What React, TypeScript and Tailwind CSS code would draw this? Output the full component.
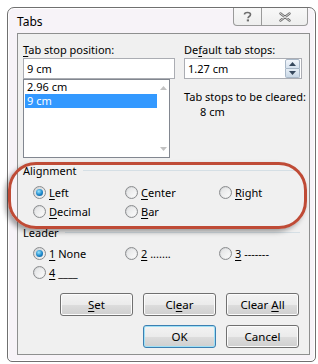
import React from "react";

function Radio({ checked = false }: { checked?: boolean }) {
  return (
    <span className="w-[13px] h-[13px] shrink-0 rounded-full border border-[#8a8c8e] bg-[linear-gradient(135deg,#cfd1d3,#f7f7f7)] flex items-center justify-center">
      {checked ? (
        <span className="w-[7px] h-[7px] rounded-full bg-[radial-gradient(circle_at_40%_35%,#9ae6ff,#1b86c9_55%,#0b4f86)]" />
      ) : (
        <span className="w-[9px] h-[9px] rounded-full bg-[linear-gradient(135deg,#e2e3e4,#fbfbfb)]" />
      )}
    </span>
  );
}

function Opt({ checked, children, w }: { checked?: boolean; children: React.ReactNode; w: string }) {
  return (
    <div className={`flex items-center gap-[3px] ${w}`}>
      <Radio checked={checked} />
      <span className="leading-none whitespace-nowrap">{children}</span>
    </div>
  );
}

function Btn({ children, def = false }: { children: React.ReactNode; def?: boolean }) {
  return (
    <div
      className={`w-[73px] h-[23px] rounded-[3px] border flex items-center justify-center bg-[linear-gradient(#f3f3f3,#ebebeb_50%,#dddddd_51%,#cfcfcf)] ${
        def ? "border-[#3c7fb1] shadow-[inset_0_0_0_1px_#9fe0f6]" : "border-[#707070] shadow-[inset_0_0_0_1px_#fcfcfc]"
      }`}
    >
      <span className="leading-none whitespace-pre text-[11.5px]">{children}</span>
    </div>
  );
}

function GroupLabel({ text }: { text: string }) {
  return (
    <div className="flex items-center h-[14px]">
      <span className="leading-none">{text}</span>
      <span className="flex-1 ml-[6px] mr-[3px] h-px bg-[#d5dfe5]" />
    </div>
  );
}

export default function App() {
  return (
    <div className="w-[318px] h-[364px] bg-white relative overflow-hidden font-['Noto_Sans',sans-serif] text-[11px] text-black">
      <div className="ml-[7px] mt-[7px] w-[309px] h-[355px] border border-[#707070] rounded-t-[7px] rounded-b-[5px] bg-[#f7f3f8] flex flex-col shadow-[inset_0_0_0_1px_#ffffff]">
        {/* title bar */}
        <div className="h-[25px] flex items-start shrink-0">
          <div className="pl-[9px] pt-[8px] text-[12px] leading-none">Tabs</div>
          <div className="ml-auto mr-[7px] flex h-[18px]">
            <div className="w-[29px] h-[18px] border border-t-0 border-[#9a9a9a] rounded-bl-[4px] flex items-center justify-center bg-[linear-gradient(#f8f8f8,#eeeeee)]">
              <svg width="9" height="11" viewBox="0 0 9 11">
                <path d="M1.5 3.5 C1.5 0.8 7.5 0.8 7.5 3.5 C7.5 5.5 5 5.5 5 7.2" fill="none" stroke="#6e6e6e" strokeWidth="1.6" />
                <rect x="3.8" y="8.4" width="2.2" height="2" fill="#6e6e6e" />
              </svg>
            </div>
            <div className="w-[46px] h-[18px] border border-t-0 border-l-0 border-[#9a9a9a] rounded-br-[4px] flex items-center justify-center bg-[linear-gradient(#f8f8f8,#eeeeee)]">
              <svg width="12" height="10" viewBox="0 0 12 10">
                <path d="M1.5 1.5 L10.5 8.5 M10.5 1.5 L1.5 8.5" stroke="#6e6e6e" strokeWidth="2.4" strokeLinecap="round" />
                <path d="M1.5 1.5 L10.5 8.5 M10.5 1.5 L1.5 8.5" stroke="#f4f4f4" strokeWidth="0.8" strokeLinecap="round" />
              </svg>
            </div>
          </div>
        </div>
        {/* client area */}
        <div className="ml-[9px] w-[293px] h-[322px] border border-[#8e8f8f] bg-[#f0f0f0] pl-[5px] pr-[6px] pt-[10px] flex flex-col">
          <div className="flex">
            {/* left column */}
            <div className="w-[152px] flex flex-col">
              <div className="leading-none h-[13px] whitespace-nowrap">
                <u className="underline-offset-2">T</u>ab stop position:
              </div>
              <div className="mt-[1px] h-[21px] w-[152px] border border-[#abadb3] bg-white flex items-center pl-[3px] leading-none">9 cm</div>
              <div className="h-[79px] w-[147px] border border-[#828790] bg-white flex">
                <div className="flex-1 pl-[1px]">
                  <div className="h-[14px] leading-[14px] pl-[2px] overflow-hidden">2.96 cm</div>
                  <div className="h-[14px] leading-[14px] pl-[2px] overflow-hidden bg-[#3399ff] text-white">9 cm</div>
                </div>
                <div className="w-[12px] flex flex-col justify-between items-center py-[6px]">
                  <svg width="7" height="4" viewBox="0 0 7 4"><path d="M0 4 L3.5 0 L7 4Z" fill="#c2c2c2" /></svg>
                  <svg width="7" height="4" viewBox="0 0 7 4"><path d="M0 0 L3.5 4 L7 0Z" fill="#c2c2c2" /></svg>
                </div>
              </div>
            </div>
            {/* right column */}
            <div className="ml-[9px] flex flex-col">
              <div className="leading-none h-[13px] whitespace-nowrap">
                De<u className="underline-offset-2">f</u>ault tab stops:
              </div>
              <div className="mt-[1px] h-[21px] w-[118px] border border-[#abadb3] bg-white flex items-center">
                <span className="pl-[3px] leading-none flex-1">1.27 cm</span>
                <div className="w-[15px] h-[19px] flex flex-col mr-px">
                  <div className="flex-1 border border-[#a9b8c8] rounded-t-[2px] bg-[linear-gradient(#f2f6fb,#d6e2ee)] flex items-center justify-center">
                    <svg width="7" height="4" viewBox="0 0 7 4"><path d="M0 4 L3.5 0 L7 4Z" fill="#36485d" /></svg>
                  </div>
                  <div className="flex-1 border border-t-0 border-[#a9b8c8] rounded-b-[2px] bg-[linear-gradient(#e6eef6,#cad8e6)] flex items-center justify-center">
                    <svg width="7" height="4" viewBox="0 0 7 4"><path d="M0 0 L3.5 4 L7 0Z" fill="#36485d" /></svg>
                  </div>
                </div>
              </div>
              <div className="mt-[12px] leading-none whitespace-nowrap">Tab stops to be cleared:</div>
              <div className="mt-[4px] ml-[16px] leading-none">8 cm</div>
            </div>
          </div>

          {/* Alignment */}
          <div className="mt-[5px]">
            <GroupLabel text="Alignment" />
            <div className="pl-[10px] mt-[9px] flex flex-col gap-[6px]">
              <div className="flex h-[13px]">
                <Opt checked w="w-[92px]"><u className="underline-offset-2">L</u>eft</Opt>
                <Opt w="w-[94px]"><u className="underline-offset-2">C</u>enter</Opt>
                <Opt w="w-[70px]"><u className="underline-offset-2">R</u>ight</Opt>
              </div>
              <div className="flex h-[13px]">
                <Opt w="w-[92px]"><u className="underline-offset-2">D</u>ecimal</Opt>
                <Opt w="w-[94px]"><u className="underline-offset-2">B</u>ar</Opt>
              </div>
            </div>
          </div>

          {/* Leader */}
          <div className="mt-[7px]">
            <GroupLabel text="Leader" />
            <div className="pl-[10px] mt-[8px] flex flex-col gap-[6px]">
              <div className="flex h-[13px]">
                <Opt checked w="w-[92px]"><u className="underline-offset-2">1</u> None</Opt>
                <Opt w="w-[94px]"><u className="underline-offset-2">2</u> .......</Opt>
                <Opt w="w-[70px]"><u className="underline-offset-2">3</u> -------</Opt>
              </div>
              <div className="flex h-[13px]">
                <Opt w="w-[92px]"><u className="underline-offset-2">4</u> ____</Opt>
              </div>
            </div>
          </div>

          {/* Buttons */}
          <div className="mt-[14px] flex justify-end gap-[10px] pr-[4px]">
            <Btn><u className="underline-offset-2">S</u>et</Btn>
            <Btn>Cl<u className="underline-offset-2">e</u>ar</Btn>
            <Btn>Clear <u className="underline-offset-2">A</u>ll</Btn>
          </div>
          <div className="mt-[9px] flex justify-end gap-[10px] pr-[4px]">
            <Btn def>OK</Btn>
            <Btn>Cancel</Btn>
          </div>
        </div>
      </div>

      {/* red annotation overlay */}
      <div className="absolute left-[8px] top-[162px] w-[299px] h-[67px] rounded-[28px] border-[3px] border-[#bf4b36] shadow-[-3px_3px_5px_rgba(0,0,0,0.35)] pointer-events-none" />
    </div>
  );
}
